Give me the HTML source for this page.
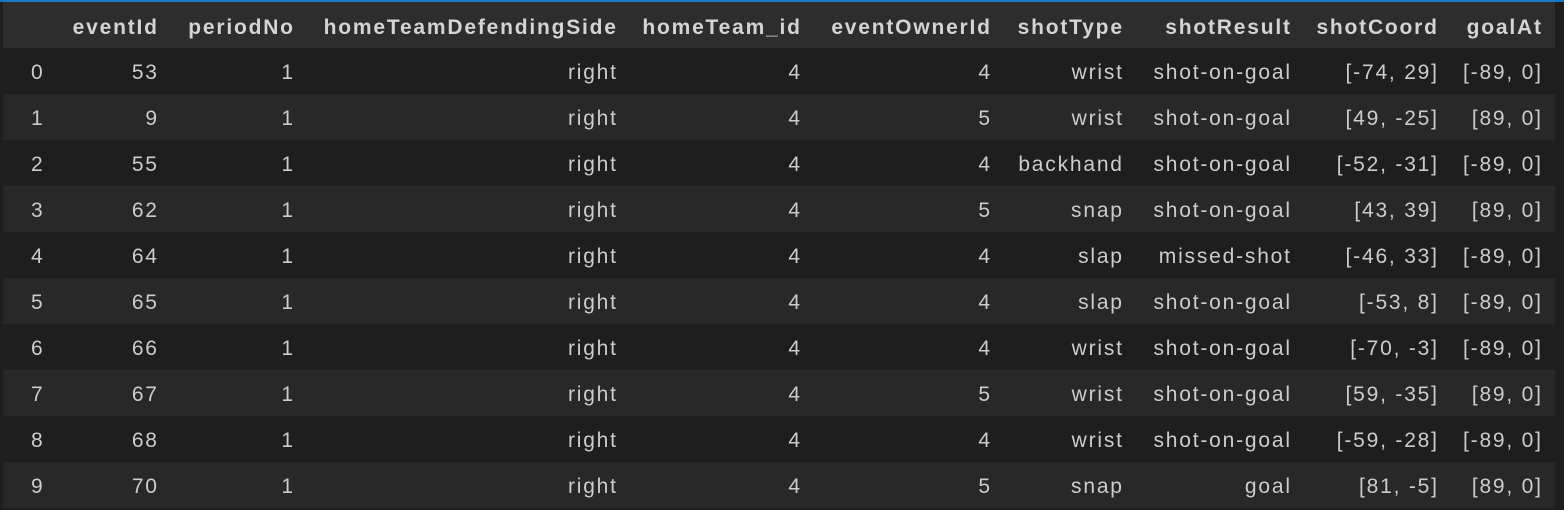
<!DOCTYPE html><html><head><style>
body{margin:0;width:1564px;height:508px;background:#1e1e1e;overflow:hidden;font-family:"Liberation Sans",sans-serif;font-size:21px;letter-spacing:1.8px;color:#cccccc;position:relative}
.bar{position:absolute;left:0;top:0;width:1564px;height:2px;background:#1a78c8}
.r{position:absolute;left:3px;width:1552px;height:46px}
.h{top:2px;height:46px;background:#2d2d2d;font-weight:bold;color:#d4d4d4}
.h span{top:3px!important}
.a{background:#1e1e1e}.b{background:#282828}
.r span{position:absolute;top:2px;line-height:46px;white-space:nowrap;margin-right:-1.8px}
</style></head><body><div class="bar"></div>
<div class="r h"><span style="right:1398px">eventId</span><span style="right:1262px">periodNo</span><span style="right:939px">homeTeamDefendingSide</span><span style="right:755px">homeTeam_id</span><span style="right:565px">eventOwnerId</span><span style="right:433px">shotType</span><span style="right:265px">shotResult</span><span style="right:118px">shotCoord</span><span style="right:14px">goalAt</span></div>
<div id="rows"></div>
<script>
var d=[[53,"wrist","shot-on-goal","[-74, 29]","[-89, 0]",4],[9,"wrist","shot-on-goal","[49, -25]","[89, 0]",5],[55,"backhand","shot-on-goal","[-52, -31]","[-89, 0]",4],[62,"snap","shot-on-goal","[43, 39]","[89, 0]",5],[64,"slap","missed-shot","[-46, 33]","[-89, 0]",4],[65,"slap","shot-on-goal","[-53, 8]","[-89, 0]",4],[66,"wrist","shot-on-goal","[-70, -3]","[-89, 0]",4],[67,"wrist","shot-on-goal","[59, -35]","[89, 0]",5],[68,"wrist","shot-on-goal","[-59, -28]","[-89, 0]",4],[70,"snap","goal","[81, -5]","[89, 0]",5]];
var h="";d.forEach(function(r,i){h+='<div class="r '+(i%2?'b':'a')+'" style="top:'+(48+46*i)+'px"><span style="left:28px">'+i+'</span><span style="right:1398px">'+r[0]+'</span><span style="right:1262px">1</span><span style="right:939px">right</span><span style="right:755px">4</span><span style="right:565px">'+r[5]+'</span><span style="right:433px">'+r[1]+'</span><span style="right:265px">'+r[2]+'</span><span style="right:118px">'+r[3]+'</span><span style="right:14px">'+r[4]+'</span></div>'});
document.getElementById("rows").outerHTML=h;
</script></body></html>
